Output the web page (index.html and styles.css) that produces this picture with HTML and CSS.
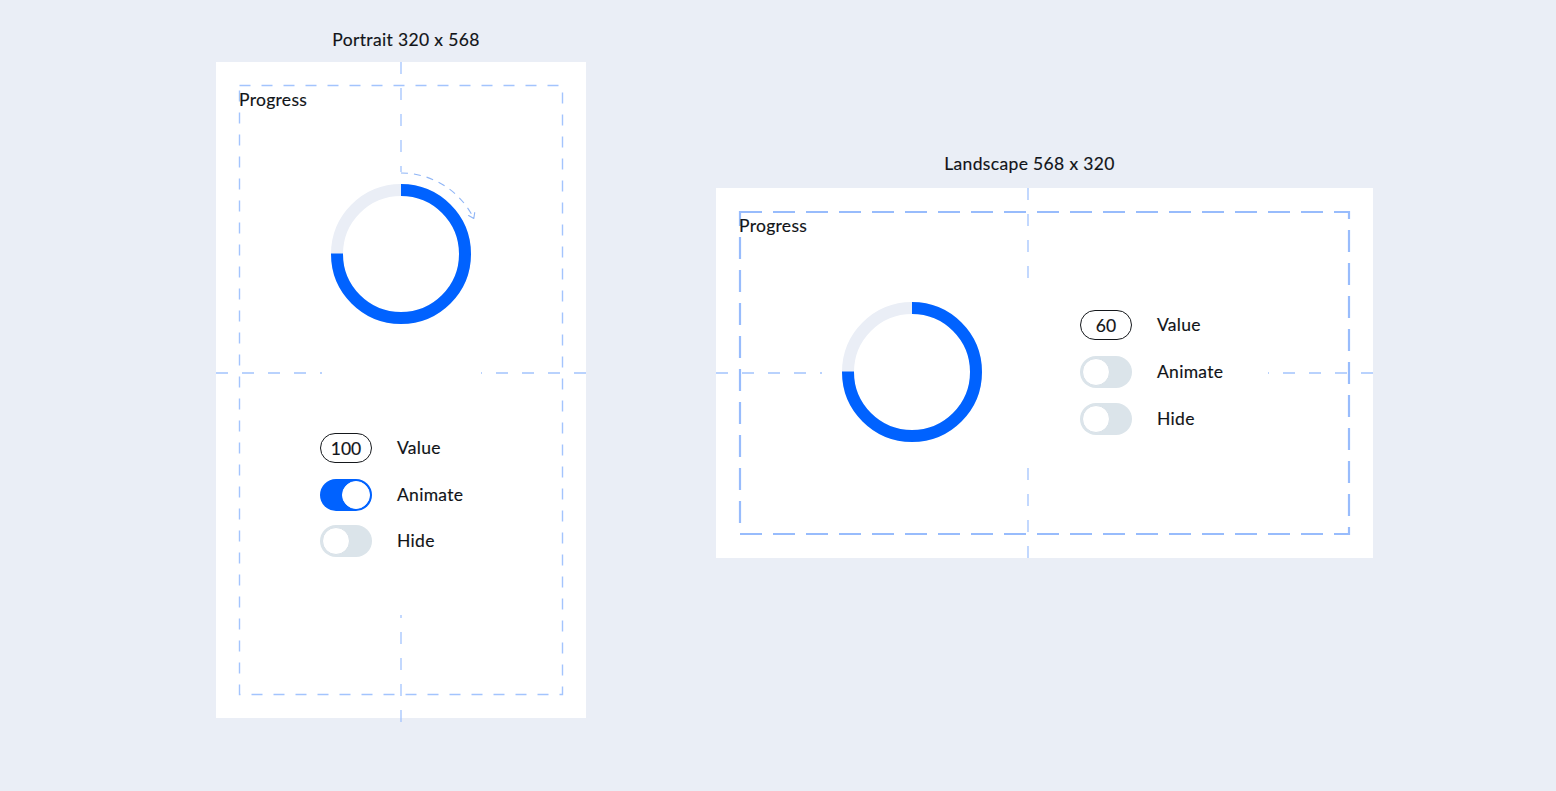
FILE: index.html
```
<!DOCTYPE html>
<html lang="en">
<head>
<meta charset="utf-8">
<title>Progress – Portrait & Landscape</title>
<link rel="stylesheet" href="styles.css">
</head>
<body>
<div class="canvas">
  <section class="frame frame-portrait">
    <h2 class="frame-title">Portrait 320 x 568</h2>
    <div class="card card-portrait">
      <svg class="guides" width="370" height="656" viewBox="0 0 370 656">
        <rect class="g-rect-thin" x="23.5" y="23.5" width="323" height="609"/>
        <line class="g-line" x1="185" y1="0" x2="185" y2="110"/>
        <line class="g-line" x1="185" y1="660" x2="185" y2="553"/>
        <line class="g-line" x1="0" y1="311" x2="106" y2="311"/>
        <line class="g-line" x1="370" y1="311" x2="265" y2="311"/>
        <path class="g-arc" d="M185 111 A81 81 0 0 1 257.8 156.5"/>
        <path class="g-arrow" d="M252.6 153.6 L257.8 156.5 L258.7 150.6"/>
      </svg>
      <div class="label">Progress</div>
      <svg class="ring ring-portrait" width="140" height="140" viewBox="0 0 140 140">
        <circle class="ring-track" cx="70" cy="70" r="64"/>
        <circle class="ring-bar" cx="70" cy="70" r="64" stroke-dasharray="301.6 402.1" transform="rotate(-90 70 70)"/>
      </svg>
      <div class="controls controls-portrait">
        <div class="row"><span class="pill">100</span><span class="row-label">Value</span></div>
        <div class="row"><span class="toggle toggle-on"><span class="knob"></span></span><span class="row-label">Animate</span></div>
        <div class="row"><span class="toggle"><span class="knob"></span></span><span class="row-label">Hide</span></div>
      </div>
    </div>
  </section>

  <section class="frame frame-landscape">
    <h2 class="frame-title">Landscape 568 x 320</h2>
    <div class="card card-landscape">
      <svg class="guides" width="657" height="370" viewBox="0 0 657 370">
        <rect class="g-rect-thick" x="24" y="24" width="609" height="322"/>
        <line class="g-line" x1="312" y1="0" x2="312" y2="104"/>
        <line class="g-line" x1="312" y1="370" x2="312" y2="266"/>
        <line class="g-line" x1="0" y1="185" x2="106" y2="185"/>
        <line class="g-line" x1="657" y1="185" x2="552" y2="185"/>
      </svg>
      <div class="label">Progress</div>
      <div class="stage">
        <svg class="ring" width="140" height="140" viewBox="0 0 140 140">
          <circle class="ring-track" cx="70" cy="70" r="64"/>
          <circle class="ring-bar" cx="70" cy="70" r="64" stroke-dasharray="301.6 402.1" transform="rotate(-90 70 70)"/>
        </svg>
        <div class="controls controls-landscape">
          <div class="row"><span class="pill">60</span><span class="row-label">Value</span></div>
          <div class="row"><span class="toggle"><span class="knob"></span></span><span class="row-label">Animate</span></div>
          <div class="row"><span class="toggle"><span class="knob"></span></span><span class="row-label">Hide</span></div>
        </div>
      </div>
    </div>
  </section>
</div>
</body>
</html>
```

FILE: styles.css
```
* { box-sizing: border-box; }

html, body {
  margin: 0;
  padding: 0;
  background: #eaeef6;
  font-family: "Lato", "Noto Sans", sans-serif;
  color: #111418;
}

body {
  width: 1556px;
  height: 791px;
  overflow: hidden;
}

.canvas {
  display: flex;
  align-items: flex-start;
  gap: 130px;
  padding-left: 216px;
}

.frame {
  display: flex;
  flex-direction: column;
}

.frame-portrait { padding-top: 28px; }
.frame-landscape { padding-top: 152px; }

.frame-title {
  margin: 0 0 10px;
  font-size: 17.5px;
  font-weight: 400;
  line-height: 24px;
  text-align: center;
  letter-spacing: 0.35px;
  -webkit-text-stroke: 0.15px #111418;
}

.frame-portrait .frame-title { padding-left: 10px; }
.frame-landscape .frame-title { margin-bottom: 12px; padding-right: 30px; }

.card {
  position: relative;
  background: #ffffff;
  display: flex;
  flex-direction: column;
  align-items: flex-start;
  padding: 26px 23px 0;
}

.card-portrait { width: 370px; height: 656px; }
.card-landscape { width: 657px; height: 370px; }

.guides {
  position: absolute;
  left: 0;
  top: 0;
  overflow: visible;
  pointer-events: none;
}

.g-rect-thin {
  fill: none;
  stroke: #a3c4fd;
  stroke-width: 1.4;
  stroke-dasharray: 11 11;
}

.g-rect-thick {
  fill: none;
  stroke: #98bcfc;
  stroke-width: 2.2;
  stroke-dasharray: 22 11;
}

.g-line {
  stroke: #a3c4fd;
  stroke-width: 1.3;
  stroke-dasharray: 12 14;
}

.g-arc {
  fill: none;
  stroke: #8fb5f6;
  stroke-width: 1.1;
  stroke-dasharray: 7 6;
}

.g-arrow {
  fill: none;
  stroke: #8fb5f6;
  stroke-width: 1.1;
  stroke-linecap: round;
  stroke-linejoin: round;
}

.label {
  position: relative;
  font-size: 17.5px;
  line-height: 24px;
  letter-spacing: 0.3px;
  -webkit-text-stroke: 0.15px #111418;
}

.ring { position: relative; display: block; }

.ring-portrait {
  align-self: center;
  margin-top: 72px;
}

.ring-track {
  fill: none;
  stroke: #eaeef6;
  stroke-width: 12;
}

.ring-bar {
  fill: none;
  stroke: #0062ff;
  stroke-width: 12;
}

.controls {
  position: relative;
  display: flex;
  flex-direction: column;
}

.controls-portrait {
  margin-top: 108px;
  margin-left: 81px;
  gap: 14.5px;
}

.controls-landscape { gap: 15px; }

.stage {
  display: flex;
  align-items: center;
  gap: 98px;
  margin-top: 64px;
  margin-left: 103px;
}

.row {
  display: flex;
  align-items: center;
  height: 32px;
  gap: 25px;
}

.row-label {
  font-size: 17.5px;
  line-height: 24px;
  letter-spacing: 0.3px;
  -webkit-text-stroke: 0.15px #111418;
}

.pill {
  width: 52px;
  height: 30px;
  border: 1.2px solid #15181c;
  border-radius: 15px;
  display: flex;
  align-items: center;
  justify-content: center;
  font-size: 17.5px;
  -webkit-text-stroke: 0.15px #111418;
}

.toggle {
  width: 52px;
  height: 32px;
  border-radius: 16px;
  background: #dbe4ea;
  display: flex;
  align-items: center;
  padding: 2px;
}

.knob {
  width: 28px;
  height: 28px;
  border-radius: 50%;
  background: #ffffff;
  border: 1px solid #d8e1e8;
}

.toggle-on {
  background: #0062ff;
  justify-content: flex-end;
}

.toggle-on .knob {
  border-color: #ffffff;
}
```
